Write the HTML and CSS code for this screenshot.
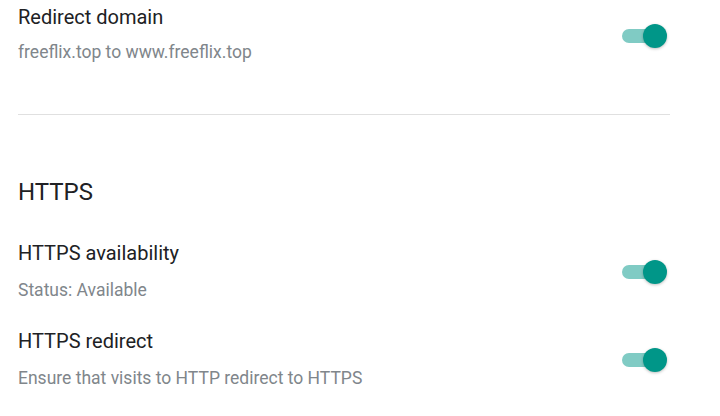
FILE: index.html
```html
<!DOCTYPE html>
<html lang="en">
<head>
<meta charset="utf-8">
<title>Domain settings</title>
<link rel="stylesheet" href="styles.css">
</head>
<body>
<main class="settings">
  <div class="row row--first">
    <div class="text">
      <div class="title">Redirect domain</div>
      <div class="desc desc--tight">freeflix.top to www.freeflix.top</div>
    </div>
    <span class="switch" role="switch" aria-checked="true"><span class="track"></span><span class="thumb"></span></span>
  </div>

  <hr class="divider">

  <h2 class="heading">HTTPS</h2>

  <div class="row row--a">
    <div class="text">
      <div class="title">HTTPS availability</div>
      <div class="desc">Status: Available</div>
    </div>
    <span class="switch" role="switch" aria-checked="true"><span class="track"></span><span class="thumb"></span></span>
  </div>

  <div class="row row--b">
    <div class="text">
      <div class="title">HTTPS redirect</div>
      <div class="desc">Ensure that visits to HTTP redirect to HTTPS</div>
    </div>
    <span class="switch" role="switch" aria-checked="true"><span class="track"></span><span class="thumb"></span></span>
  </div>
</main>
</body>
</html>
```

FILE: styles.css
```css
* { box-sizing: border-box; }

html, body {
  margin: 0;
  padding: 0;
  background: #ffffff;
}

body {
  font-family: Roboto, "Noto Sans", "Liberation Sans", sans-serif;
  color: #202124;
}

.settings {
  width: 652px;
  margin-left: 18px;
  padding-top: 3px;
}

.row {
  display: flex;
  align-items: flex-start;
  justify-content: space-between;
}

.row--a { margin-top: 31px; }
.row--b { margin-top: 25.5px; }

.text {
  display: flex;
  flex-direction: column;
}

.title {
  font-size: 20px;
  line-height: 28px;
  color: #202124;
}

.desc {
  font-size: 17.5px;
  line-height: 24px;
  color: #80868b;
  margin-top: 11px;
}

.desc--tight { margin-top: 8.5px; }

.switch {
  position: relative;
  display: block;
  width: 45px;
  height: 24px;
  margin-top: 21px;
  margin-right: 3px;
  flex: none;
}

.track {
  position: absolute;
  left: 0;
  top: 5px;
  width: 36px;
  height: 14px;
  border-radius: 7px;
  background: #80cbc4;
}

.thumb {
  position: absolute;
  right: 0;
  top: 0;
  width: 24px;
  height: 24px;
  border-radius: 50%;
  background: #009688;
  box-shadow: 0 1px 3px rgba(0, 0, 0, 0.25);
}

.divider {
  border: 0;
  height: 1px;
  background: #e0e0e0;
  margin: 50px 0 0 0;
}

.heading {
  margin: 61px 0 0 0;
  font-size: 24px;
  line-height: 32px;
  font-weight: 400;
  color: #202124;
}
```
